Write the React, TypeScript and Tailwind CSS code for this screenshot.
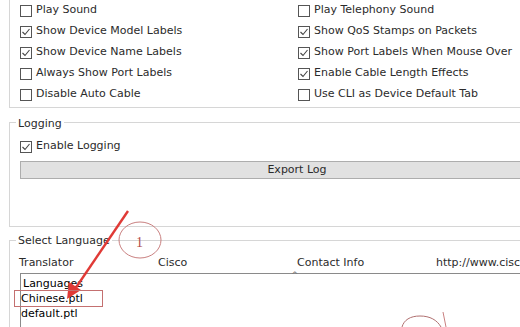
import React from "react";

const FONT = "font-['DejaVu_Sans',sans-serif]";

const Checkbox = ({ checked }: { checked?: boolean }) => (
  <svg width="12" height="12" viewBox="0 0 12 12" className="shrink-0">
    <rect x="0.5" y="0.5" width="11" height="11" fill="#fff" stroke="#555" />
    {checked && <path d="M2.5 6 L5 8.5 L9.5 3" fill="none" stroke="#444" strokeWidth="1.1" />}
  </svg>
);

const Option = ({ label, checked }: { label: string; checked?: boolean }) => (
  <div className="flex h-[21px] items-center gap-[4px]">
    <Checkbox checked={checked} />
    <span className="whitespace-nowrap">{label}</span>
  </div>
);

const leftOptions = [
  { label: "Play Sound" },
  { label: "Show Device Model Labels", checked: true },
  { label: "Show Device Name Labels", checked: true },
  { label: "Always Show Port Labels" },
  { label: "Disable Auto Cable" },
];

const rightOptions = [
  { label: "Play Telephony Sound" },
  { label: "Show QoS Stamps on Packets", checked: true },
  { label: "Show Port Labels When Mouse Over", checked: true },
  { label: "Enable Cable Length Effects", checked: true },
  { label: "Use CLI as Device Default Tab" },
];

const Annotations = () => (
  <svg className="pointer-events-none absolute left-0 top-0" width="520" height="327" viewBox="0 0 520 327">
    <ellipse cx="140" cy="240" rx="21" ry="18" fill="none" stroke="#c98080" strokeWidth="1" />
    <text x="136" y="247" fontFamily="'Liberation Serif', serif" fontSize="14" fill="#b04a4a">
      1
    </text>
    <line x1="128" y1="211" x2="75" y2="289" stroke="#e03a36" strokeWidth="2.4" />
    <path d="M67 299 L69 282 L81 290 Z" fill="#e03a36" />
    <rect x="14.5" y="290.5" width="88" height="16" fill="none" stroke="#c47070" strokeWidth="1" />
    <path d="M402 327 C404 320 410 316 420 316 C430 316 437 320 441 327" fill="none" stroke="#b07070" strokeWidth="1" />
    <line x1="443" y1="312" x2="446" y2="327" stroke="#c98080" strokeWidth="1" />
  </svg>
);

export default function App() {
  return (
    <div className={`relative h-[327px] w-[520px] overflow-hidden bg-white text-[11px] text-[#2b2b2b] ${FONT}`}>
      <div className="w-[575px] pl-[9px]">
        {/* general options, top cut off */}
        <div className="flow-root h-[108px] border-b border-l border-[#d6d6d6]">
          <div className="flex pl-[10px]">
            <div className="w-[278px]">
              {leftOptions.map((o) => (
                <Option key={o.label} label={o.label} checked={o.checked} />
              ))}
            </div>
            <div>
              {rightOptions.map((o) => (
                <Option key={o.label} label={o.label} checked={o.checked} />
              ))}
            </div>
          </div>
        </div>

        {/* Logging */}
        <div className="mt-[14px] h-[105px] border border-[#d6d6d6]">
          <span className="-mt-[6px] ml-[6px] block w-fit bg-white px-[2px] leading-[14px]">Logging</span>
          <div className="mt-[5px] pl-[10px]">
            <Option label="Enable Logging" checked />
          </div>
          <div className="ml-[10px] mt-[4px] flex h-[18px] items-center justify-center border border-[#adadad] bg-[#e1e1e1]">
            Export Log
          </div>
        </div>

        {/* Select Language */}
        <div className="mt-[13px] h-[200px] border border-[#d6d6d6]">
          <span className="-mt-[7px] ml-[6px] block w-fit bg-white px-[2px] leading-[14px]">Select Language</span>
          <div className="mt-[8px] flex h-[15px] items-center pl-[9px]">
            <span className="w-[139px]">Translator</span>
            <span className="w-[139px]">Cisco</span>
            <span className="w-[139px]">Contact Info</span>
            <span className="whitespace-nowrap">http://www.cisco.com</span>
          </div>
          <div className="ml-[10px] mt-[2px] h-[120px] border-l border-t border-[#8a8a8a] text-black">
            <div className="relative mt-[2px] flex h-[16px] items-center pl-[2px]">
              Languages
              <span className="absolute left-[270px] top-[-7px] text-[9px] text-[#777]">^</span>
            </div>
            <div className="flex h-[15px] items-center">Chinese.ptl</div>
            <div className="flex h-[15px] items-center">default.ptl</div>
          </div>
        </div>
      </div>
      <Annotations />
    </div>
  );
}
